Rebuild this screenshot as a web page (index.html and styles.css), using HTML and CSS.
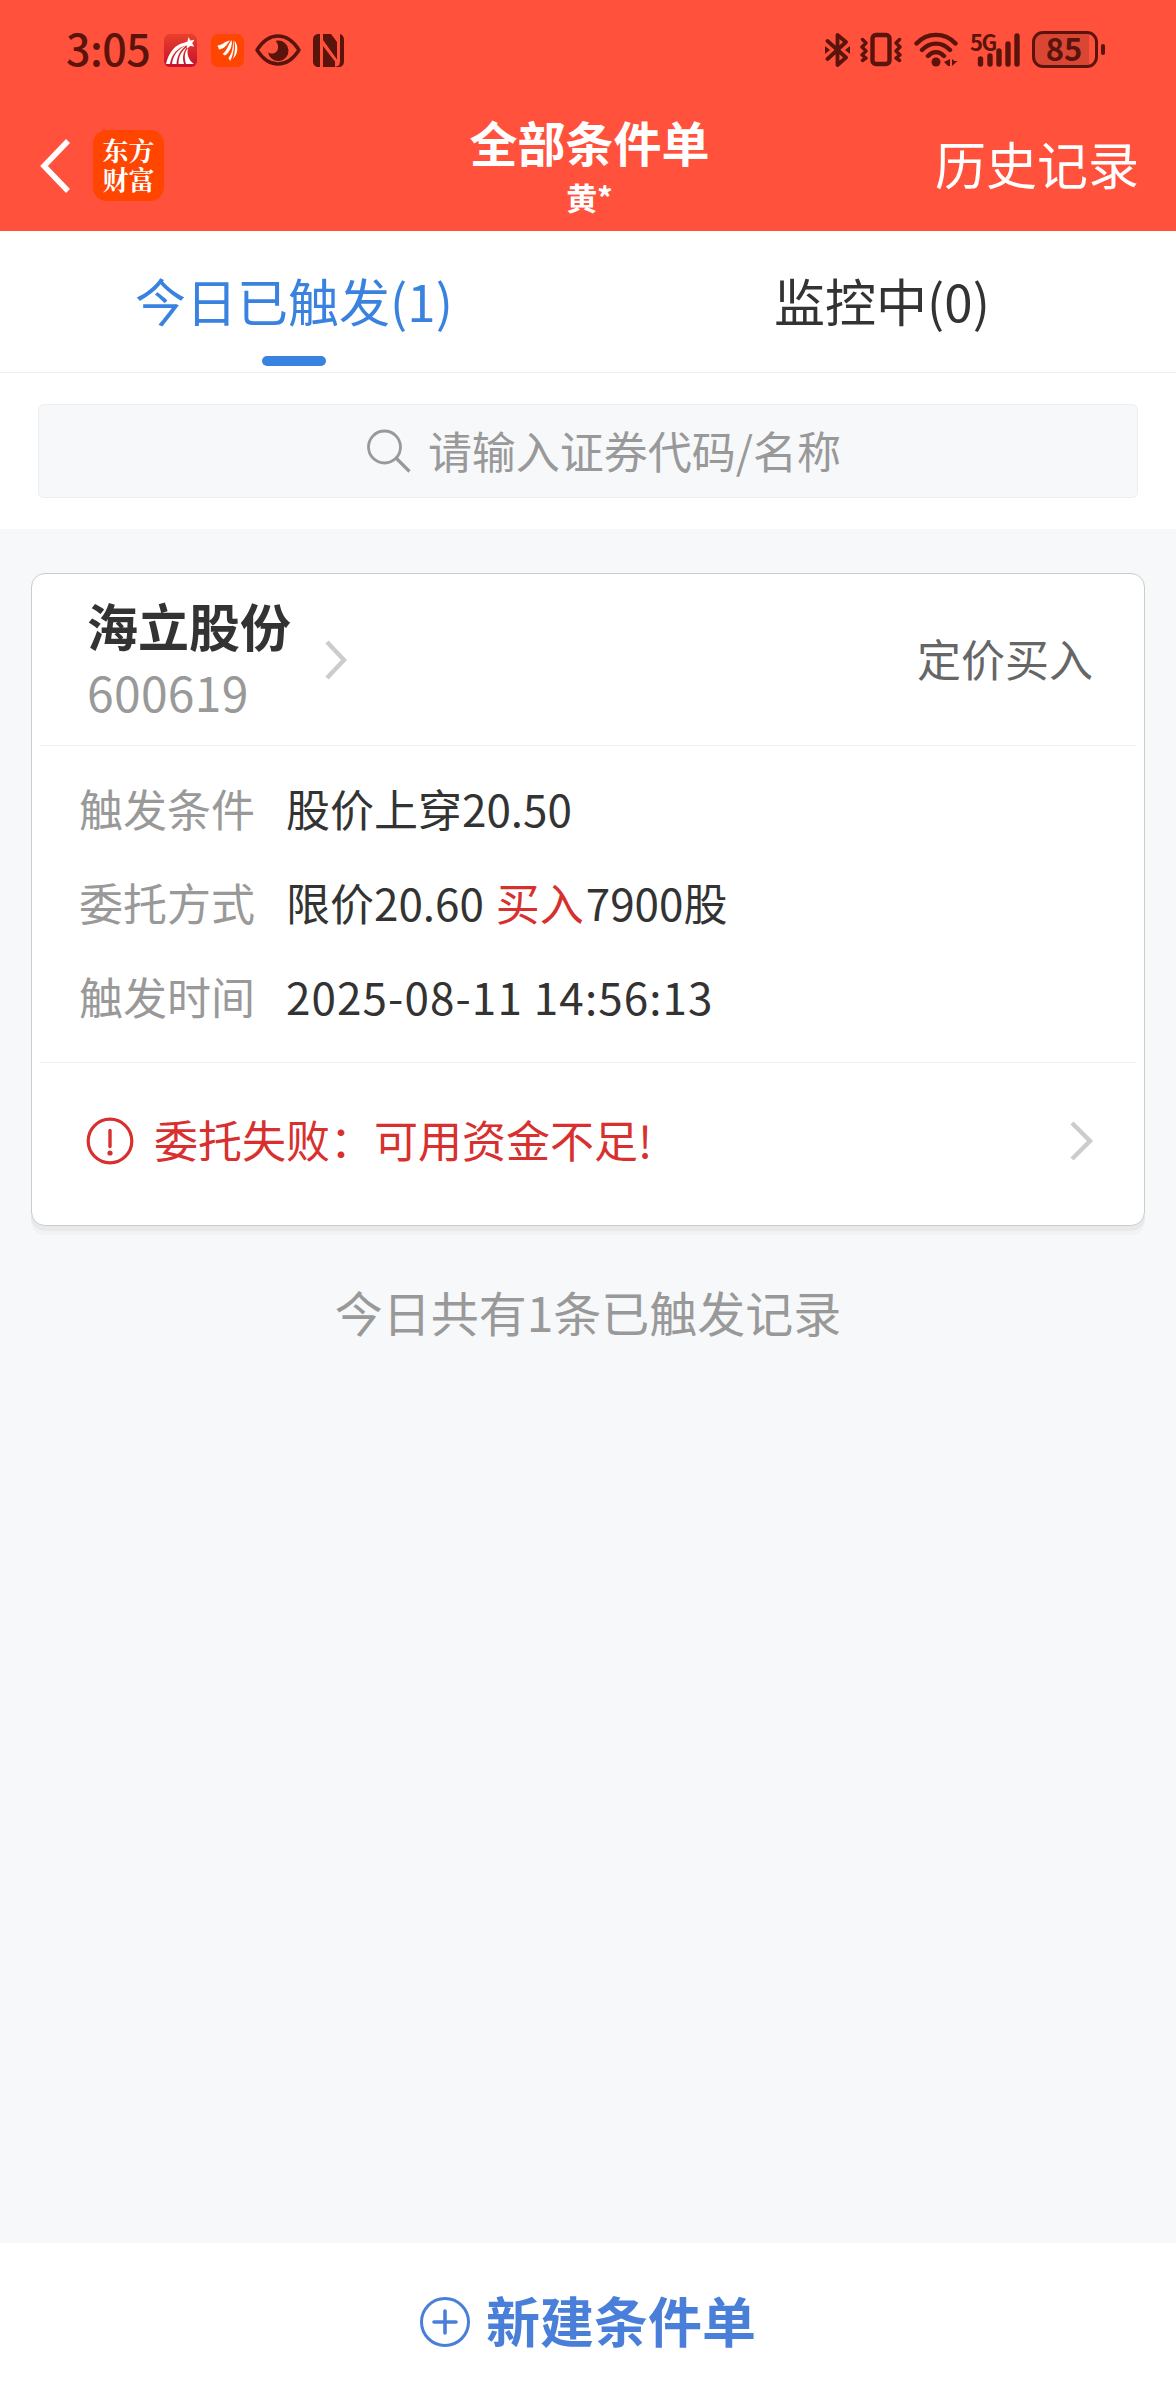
FILE: index.html
```html
<!DOCTYPE html>
<html lang="zh-CN">
<head>
  <meta charset="UTF-8">
  <meta name="viewport" content="width=device-width,initial-scale=1.0">
  <title>全部条件单</title>
  <link rel="stylesheet" href="styles.css">
</head>
<body>

  <header>
    <!-- STATUS BAR -->
    <div class="status">
      <div class="status-left">
        <span class="clock">3:05</span>
        <svg class="app-star" width="33" height="33" viewBox="0 0 33 33">
          <defs>
            <linearGradient id="starBg" x1="0" y1="0" x2="0" y2="1">
              <stop offset="0" stop-color="#e8402c"/>
              <stop offset="1" stop-color="#c80f2e"/>
            </linearGradient>
          </defs>
          <rect width="33" height="33" rx="6" fill="url(#starBg)"/>
          <path fill="#fff" d="M24.5 3l1.8 3.6 4.2-.9-2.3 3.6 2 3.2-4-.6-2.8 2.600-.8-3C14 13 7.500 20 6 30H2C4.500 19 11 10 21 8.500l2.500-1z"/>
          <path fill="#fff" d="M8 30c1-8 5-14.500 14-18.500-6 5-9 11-9.500 18.500zM14.500 30c0-7 2.500-12.500 8.500-17-4 5-5 11-3 17zM22 30c-2-7-1.500-12 2-16-1.500 6 .5 12 6 16z"/>
        </svg>
        <svg class="app-east" width="33" height="33" viewBox="0 0 33 33">
          <rect width="33" height="33" rx="7" fill="#ff4500"/>
          <path fill="#fff" d="M6.500 11.500C11 11.500 13 7.500 19 6.500 16.500 10 14 14.500 8 15.500zM11.500 20C16 17 17 11 20.500 6c1.500 6-2 12.500-6.500 15.500zM17.500 24c4-5 4.500-11 4.700-18 1.300 5 1 13-3 21z"/>
          <path fill="#fff" d="M23.500 6.500c4 5 4 13-1.500 18.500 2-6 2.500-12 1.500-18.500z"/>
        </svg>
        <svg class="eye" width="46" height="32" viewBox="0 0 46 32">
          <path fill="none" stroke="#5a140c" stroke-width="3.400" stroke-linejoin="round" d="M2 16C8 6.500 15 2 23 2s15 4.500 21 14c-6 9.500-13 14-21 14S8 25.500 2 16z"/>
          <path fill="#5a140c" d="M22.500 6.500A10.300 10.300 0 1 1 13 18c2.500 2.500 7 2 9-1 2.200-3.500.8-8-1.500-10z"/>
        </svg>
        <svg width="31" height="33" viewBox="0 0 31 33">
          <path fill="#5a140c" d="M6 0h1v33H6c-4 0-6-2-6-6V6c0-4 2-6 6-6zM10 0h8l6 8v17.500L10 6zM27 0c2.500.5 4 2.500 4 6v21c0 4-2 6-6 6h-3l4-1.500 1-3.500zM10 12l12 15.500V33H10z"/>
        </svg>
      </div>
      <div class="status-right">
        <svg width="25" height="36" viewBox="0 0 25 36">
          <path fill="none" stroke="#5a140c" stroke-width="3.800" stroke-linejoin="round" stroke-linecap="round" d="M2.500 9L21 25.500 12.500 33V3L21 10 2.500 27"/>
          <path fill="#5a140c" d="M0 14l5 4-5 4zM25 14l-5 4 5 4z"/>
        </svg>
        <svg class="vibrate" width="42" height="36" viewBox="0 0 42 36">
          <rect x="12.500" y="3" width="17" height="29" rx="3.500" fill="none" stroke="#5a140c" stroke-width="4.400"/>
          <path fill="none" stroke="#5a140c" stroke-width="3.400" stroke-linecap="round" stroke-linejoin="round" d="M2.500 7.500L6 11l-4 4 4 4-4 4 4 3-3.500 2.500M39.500 7.500L36 11l4 4-4 4 4 4-4 3 3.500 2.500"/>
        </svg>
        <svg class="wifi" width="44" height="36" viewBox="0 0 44 36">
          <path fill="none" stroke="#5a140c" stroke-width="4.400" stroke-linecap="round" d="M2.500 11.500C13 0 31 0 41.500 11.500M8 18c8-8.500 20-8.500 28 0M14 24c5-5 11-5 16 0"/>
          <circle cx="22" cy="30" r="4.500" fill="#5a140c"/>
          <path fill="#5a140c" d="M36 27v7h-2l-4-4zM38 27v7l5.500-5h-3z"/>
        </svg>
        <div class="signal">
          <span class="net">5G</span>
          <svg width="50" height="36" viewBox="0 0 50 36">
            <path stroke="#5a140c" stroke-width="5.400" stroke-linecap="round" d="M10.500 27v5M20 24v8M29 19v13M38 12v20M47 4v28"/>
          </svg>
        </div>
        <div class="battery"><span>85</span></div>
        <i class="battery-tip"></i>
      </div>
    </div>

    <!-- NAVIGATION -->
    <nav>
      <div class="nav-left">
        <svg width="31" height="54" viewBox="0 0 31 54">
          <path fill="none" stroke="#fff" stroke-width="5.500" d="M28 2L4 27l24 25"/>
        </svg>
        <div class="logo">东方<br>财富</div>
      </div>
      <div class="nav-title">
        <h1>全部条件单</h1>
        <p>黄*</p>
      </div>
      <a class="history">历史记录</a>
    </nav>
  </header>

  <div class="tabs">
    <div class="tab active">今日已触发(1)</div>
    <div class="tab">监控中(0)</div>
  </div>

  <div class="search">
    <div class="search-box">
      <svg width="44" height="44" viewBox="0 0 44 44">
        <circle cx="17.500" cy="18" r="16" fill="none" stroke="#999" stroke-width="2.800"/>
        <path stroke="#999" stroke-width="3.200" d="M29.500 29.500l13 13"/>
      </svg>
      <span>请输入证券代码/名称</span>
    </div>
  </div>

  <main>
    <section class="card">
      <div class="card-head">
        <div class="stock">
          <h2>海立股份</h2>
          <p>600619</p>
        </div>
        <svg class="arrow" width="22" height="40" viewBox="0 0 22 40">
          <path fill="none" stroke="#ccc" stroke-width="4.400" d="M2 2l17 18L2 38"/>
        </svg>
        <span class="kind">定价买入</span>
      </div>

      <div class="rows">
        <div class="row"><span class="label">触发条件</span><span>股价上穿20.50</span></div>
        <div class="row"><span class="label">委托方式</span><span>限价20.60 <em>买入</em>7900股</span></div>
        <div class="row"><span class="label">触发时间</span><span class="time">2025-08-11 14:56:13</span></div>
      </div>

      <div class="result">
        <svg width="48" height="48" viewBox="0 0 48 48">
          <circle cx="24" cy="24" r="21.800" fill="none" stroke="#d8302f" stroke-width="3.200"/>
          <path stroke="#d8302f" stroke-width="3.400" stroke-linecap="round" d="M24 13.500v16"/>
          <circle cx="24" cy="36" r="2.600" fill="#d8302f"/>
        </svg>
        <span>委托失败：可用资金不足!</span>
        <svg class="arrow" width="24" height="40" viewBox="0 0 24 40">
          <path fill="none" stroke="#ccc" stroke-width="4.400" d="M2 2l18 18L2 38"/>
        </svg>
      </div>
    </section>

    <p class="total">今日共有1条已触发记录</p>
  </main>

  <footer>
    <svg width="50" height="50" viewBox="0 0 50 50">
      <circle cx="25" cy="25" r="23.500" fill="none" stroke="#4a7fd9" stroke-width="3"/>
      <path stroke="#4a7fd9" stroke-width="3.600" stroke-linecap="round" d="M25 14v22M14 25h22"/>
    </svg>
    <span>新建条件单</span>
  </footer>

</body>
</html>
```
FILE: styles.css
```css
* { box-sizing:border-box; margin:0; padding:0; }
body {
  display:flex;
  flex-direction:column;
  height:2400px;
  background:#f7f8fa;
  color:#333;
  font-family:"Noto Sans CJK SC", sans-serif;
}
svg { display:block; flex:none; }

header { height:231px; background:#ff513b; color:#fff; }

/* status bar */
.status { display:flex; justify-content:space-between; height:100px; padding:0 71px 0 66px; color:#5a140c; }
.status-left, .status-right { display:flex; align-items:center; }
.clock { width:98px; font-size:43px; line-height:60px; font-weight:500; letter-spacing:-.5px; padding-bottom:6px; }
.app-east { margin-left:14px; }
.eye { margin:0 12px 0 11px; }
.status-right { padding-bottom:1px; }
.vibrate { margin:0 12px 0 10px; }
.wifi { margin-right:12px; }
.signal { position:relative; width:50px; }
.net { position:absolute; left:0; top:-3px; font-size:22px; line-height:24px; font-weight:700; letter-spacing:-1.5px; }
.battery {
  width:66px; height:37px;
  margin-left:12px;
  border:3px solid #5a140c;
  border-radius:11px;
  background:linear-gradient(90deg, #d94634 54px, #ff513b 54px);
  font-size:31px; line-height:27px; font-weight:700;
  text-align:center;
}
.battery span { display:block; padding-right:2px; }
.battery-tip { width:4px; height:11px; margin-left:3px; border-radius:2px; background:#5a140c; }

/* nav */
nav { display:grid; grid-template-columns:1fr auto 1fr; align-items:center; height:131px; padding:0 37px 0 40px; }
.nav-left { display:flex; align-items:center; gap:22px; }
.logo {
  width:71px; height:71px;
  padding-top:8px;
  border-radius:14px;
  background:#ff4500;
  font-family:"Liberation Serif", "Noto Serif CJK SC", "Noto Sans CJK SC", serif;
  font-size:26px; line-height:29px; font-weight:700;
  text-align:center;
}
.nav-title { padding-bottom:5px; text-align:center; }
.nav-title h1 { font-size:48px; line-height:60px; font-weight:700; }
.nav-title p { margin-top:8px; font-size:31px; line-height:36px; font-weight:700; }
.history { justify-self:end; padding-bottom:5px; font-size:51px; line-height:60px; }

/* tabs */
.tabs { display:flex; height:142px; background:#fff; border-bottom:1px solid #eee; }
.tab { flex:1; padding-top:39px; font-size:51px; line-height:60px; text-align:center; }
.tab.active { color:#3a82e0; }
.tab.active::after { content:""; display:block; width:64px; height:10px; margin:26px auto 0; border-radius:5px; background:#3a82e0; }

/* search */
.search { padding:31px 38px; background:#fff; }
.search-box {
  display:flex; align-items:center; justify-content:center;
  gap:17px;
  height:94px;
  padding-left:32px;
  border:1px solid #eee;
  border-radius:6px;
  background:#f7f8fa;
  color:#999;
  font-size:44px; line-height:60px;
}
.search-box span { padding-bottom:3px; }

main { flex:1; padding:44px 31px 0; }

/* order card */
.card { height:653px; border:1px solid #ccc; border-radius:14px; background:#fff; box-shadow:0 5px 0 #e8e9eb, 0 9px 0 #f1f2f4; }
.card-head { display:flex; align-items:center; height:172px; margin:0 8px; padding:0 43px 0 47px; border-bottom:1px solid #eee; }
.stock { width:238px; padding-bottom:3px; }
.stock h2 { font-size:51px; line-height:64px; font-weight:700; white-space:nowrap; }
.stock p { margin-top:2px; color:#999; font-size:48px; line-height:64px; letter-spacing:.3px; }
.kind { margin-left:auto; padding-bottom:4px; color:#666; font-size:44px; line-height:60px; }

.rows { height:317px; margin:0 8px; padding:15px 0 0 39px; border-bottom:1px solid #eee; }
.row { display:flex; font-size:44px; line-height:94px; }
.label { width:207px; color:#999; }
.row em { margin-left:2px; margin-right:2px; color:#d8302f; font-style:normal; }
.time { letter-spacing:1.100px; }

.result { display:flex; align-items:center; height:161px; padding:0 50px 6px 54px; color:#d8302f; font-size:44px; line-height:60px; }
.result span { margin-left:20px; padding-bottom:3px; }
.result .arrow { margin-left:auto; }

.total { margin-top:55px; color:#999; font-size:48px; line-height:60px; text-align:center; }

footer {
  display:flex; align-items:center; justify-content:center;
  gap:16px;
  height:157px;
  background:#fff;
  color:#4a7fd9;
  font-size:54px; line-height:70px; font-weight:700;
}
footer span { padding-bottom:4px; }
```
